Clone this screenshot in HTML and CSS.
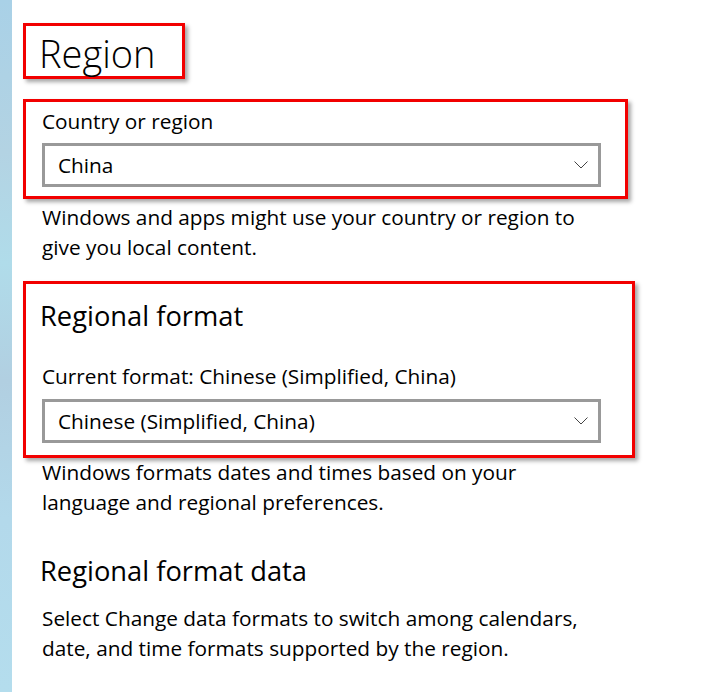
FILE: index.html
```html
<!DOCTYPE html>
<html lang="en">
<head>
  <meta charset="UTF-8" />
  <title>Region</title>
  <link rel="stylesheet" href="styles.css">
</head>
<body>
  <div class="strip"></div>

  <div class="page">
    <div class="mark mark-title">
      <h1>Region</h1>
    </div>

    <div class="mark mark-country">
      <div class="label">Country or region</div>
      <div class="select">
        <span>China</span>
        <svg class="chevron" width="14" height="8" viewBox="0 0 14 8">
          <path d="M0.5 0.5 L7 7 L13.5 0.5" fill="none" stroke="#444" stroke-width="1"/>
        </svg>
      </div>
    </div>

    <p class="desc desc-country">Windows and apps might use your country or region to give you local content.</p>

    <div class="mark mark-format">
      <h2>Regional format</h2>
      <div class="label label-format">Current format: Chinese (Simplified, China)</div>
      <div class="select">
        <span>Chinese (Simplified, China)</span>
        <svg class="chevron" width="14" height="8" viewBox="0 0 14 8">
          <path d="M0.5 0.5 L7 7 L13.5 0.5" fill="none" stroke="#444" stroke-width="1"/>
        </svg>
      </div>
    </div>

    <p class="desc desc-format">Windows formats dates and times based on your language and regional preferences.</p>

    <h2 class="data-title">Regional format data</h2>
    <p class="desc desc-data">Select Change data formats to switch among calendars, date, and time formats supported by the region.</p>
  </div>
</body>
</html>
```

FILE: styles.css
```css
body {
  margin: 0;
  font-family: "Open Sans", "Noto Sans", sans-serif;
  color: #000;
  background: #fff;
  display: flex;
  min-height: 100vh;
}

.strip {
  width: 12px;
  flex-shrink: 0;
  background: linear-gradient(to bottom, #a9d1e7 0%, #b3d3e3 22%, #b0dcea 38%, #b1cfe1 55%, #b3d9eb 75%, #b4dded 100%);
}

.page {
  padding-left: 11px;
  padding-top: 23px;
  flex: 1;
}

/* red annotation boxes */
.mark {
  border: 3px solid #f20000;
  box-shadow: 3px 3px 4px rgba(0, 0, 0, 0.35);
}

.mark-title {
  display: inline-block;
  box-sizing: border-box;
  width: 162px;
  height: 56px;
  padding: 2px 0 0 13px;
}

h1 {
  margin: 0;
  font-size: 38px;
  font-weight: 300;
  line-height: 50px;
}

.mark-country {
  margin-top: 20px;
  width: 605px;
  box-sizing: border-box;
  padding: 5px 24px 9px 16px;
}

.label {
  font-size: 20.8px;
  line-height: 28px;
}

.select {
  margin-top: 8px;
  height: 44px;
  box-sizing: border-box;
  border: 3px solid #999;
  display: flex;
  align-items: center;
  justify-content: space-between;
  padding: 0 10px 0 13px;
  font-size: 20.8px;
}

.chevron {
  display: block;
}

.desc {
  margin: 0;
  padding-left: 19px;
  width: 550px;
  font-size: 20.8px;
  line-height: 30px;
}

.desc-country {
  margin-top: 3px;
}

.mark-format {
  margin-top: 19px;
  width: 612px;
  box-sizing: border-box;
  padding: 12px 31px 12px 14px;
}

h2 {
  margin: 0;
  font-size: 27.3px;
  font-weight: 400;
  line-height: 40px;
}

.mark-format .label,
.mark-format .select {
  margin-left: 2px;
}

.label-format {
  margin-top: 26px;
}

.mark-format .select {
  margin-top: 9px;
}

.desc-format {
  margin-top: -1px;
}

.data-title {
  margin-top: 34px;
  padding-left: 17px;
}

.desc-data {
  margin-top: 12px;
}
```
